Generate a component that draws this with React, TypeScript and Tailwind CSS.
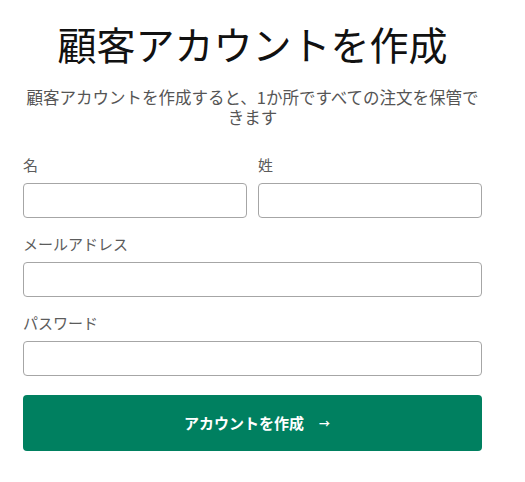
const font = { fontFamily: '"Noto Sans CJK JP", "Noto Sans", sans-serif' };

function Field({ label, className = "" }: { label: string; className?: string }) {
    return (
        <div className={"flex flex-col " + className}>
            <label className="text-[15px] leading-[20px] text-[#5c5c5c]">{label}</label>
            <input className="mt-[8px] h-[35px] w-full rounded-[4px] border border-[#a6a6a6] bg-white px-3 outline-none" />
        </div>
    )
}

export default function App() {
    return (
        <div className="min-h-screen w-full bg-white" style={font}>
            <div className="ml-[23px] w-[459px] pt-[20px]">
                <h1 className="text-center text-[39px] leading-[47px] font-normal text-[#111]">顧客アカウントを作成</h1>
                <p className="mt-[20px] text-center text-[16.5px] leading-[20px] text-[#555]">
                    顧客アカウントを作成すると、1か所ですべての注文を保管できます
                </p>
                <div className="mt-[28px] flex gap-[11px]">
                    <Field label="名" className="flex-1" />
                    <Field label="姓" className="flex-1" />
                </div>
                <Field label="メールアドレス" className="mt-[16px]" />
                <Field label="パスワード" className="mt-[16px]" />
                <button className="mt-[19px] flex h-[56px] w-full items-center justify-center gap-[15px] rounded-[4px] bg-[#008060] pl-[9px] text-[15px] font-bold text-white">
                    <span>アカウントを作成</span>
                    <span className="text-[11px]">→</span>
                </button>
            </div>
        </div>
    )
}
